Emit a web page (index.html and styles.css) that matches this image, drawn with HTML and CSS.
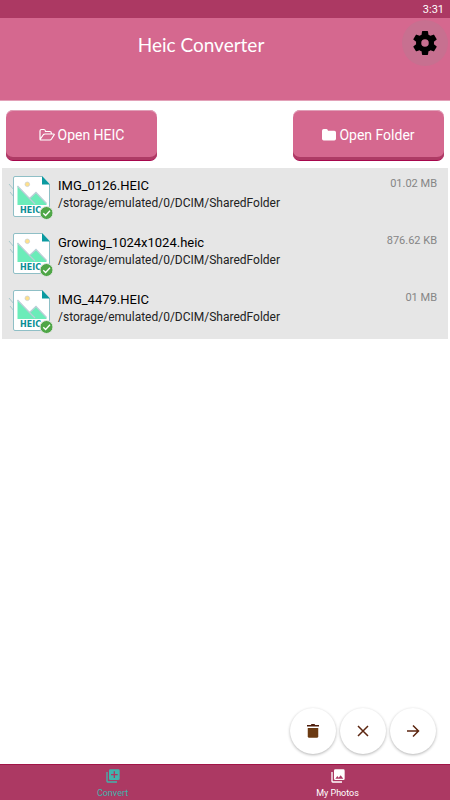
FILE: index.html
```html
<!DOCTYPE html>
<html lang="en">
<head>
<meta charset="utf-8">
<meta name="viewport" content="width=device-width, initial-scale=1">
<title>Heic Converter</title>
<link rel="stylesheet" href="styles.css">
</head>
<body>
<div class="app">
  <div class="status">3:31</div>
  <header class="header">
    <h1 class="title">Heic Converter</h1>
    <button class="settings" aria-label="Settings">
      <svg width="30" height="30" viewBox="0 0 24 24"><path d="M19.140 12.940c.04-.3.060-.61.060-.94s-.02-.64-.07-.94l2.030-1.580a.49.490 0 0 0 .12-.61l-1.920-3.320a.49.490 0 0 0-.59-.22l-2.390.96a7 7 0 0 0-1.620-.94l-.36-2.540a.48.480 0 0 0-.48-.41h-3.840a.48.480 0 0 0-.47.410l-.36 2.540c-.59.240-1.130.57-1.620.94l-2.390-.96a.48.480 0 0 0-.59.220L2.740 8.870a.48.480 0 0 0 .12.610l2.030 1.580a6 6 0 0 0 0 1.880l-2.030 1.580a.49.490 0 0 0-.12.610l1.920 3.320c.12.220.37.290.59.220l2.390-.96c.5.380 1.030.7 1.620.94l.36 2.540c.05.240.24.410.48.410h3.840c.24 0 .44-.17.470-.41l.36-2.540a7 7 0 0 0 1.620-.94l2.390.96c.22.080.47 0 .59-.22l1.920-3.320a.47.470 0 0 0-.12-.61zM12 15a3 3 0 1 1 0-6 3 3 0 0 1 0 6z"/></svg>
    </button>
  </header>
  <main class="main">
    <div class="actions">
      <button class="action">
        <svg width="16" height="14" viewBox="0 0 16 14" fill="none" stroke="#fff" stroke-width="1.200" stroke-linejoin="round"><path d="M1 11V3Q1 1.500 2.500 1.500H5Q6.300 1.500 6.500 3.500H11Q12.300 3.500 12.300 5V6M1 11.500L4.500 6.500Q5 6 6 6H14.500Q15.700 6 15 7L12.500 11Q11.800 12 11 12H2Q1 12 1 11"/></svg>
        <span>Open HEIC</span>
      </button>
      <button class="action">
        <svg width="14" height="14" viewBox="0 0 14 14"><path d="M0 2.800Q0 1 1.800 1H4.500Q5.700 1 6 2.700H12.300Q14 2.700 14 4.500V10.700Q14 12.500 12.300 12.500H1.700Q0 12.500 0 10.700Z" fill="#fff"/></svg>
        <span>Open Folder</span>
      </button>
    </div>
    <ul class="files">
      <li class="file">
        <svg class="thumb" width="46" height="46" viewBox="0 0 46 46">
          <path d="M1 10l5 6M2 18l4 5" fill="none" stroke="#a9c9cc"/>
          <path d="M7 2.500H34L41.500 10.500V41Q41.500 42.500 40 42.500H7Q5.500 42.500 5.500 41V4Q5.500 2.500 7 2.500Z" fill="#fff" stroke="#8fbfc6"/>
          <path d="M34 2L42 10.500H34Z" fill="#0b9aa0"/>
          <circle cx="19.300" cy="10.300" r="2.300" fill="#ffe08a" stroke="#c5cfd6" stroke-width=".7"/>
          <path d="M9.500 12L21.500 24.500L28 18.500L38.500 29.500V31H9.500Z" fill="#6becb9"/>
          <path d="M9.500 12L21.500 24.500L28 18.500L38.500 29.500M21.500 24.500L27 30" fill="none" stroke="#b9ced6" stroke-width="1.300"/>
          <text class="file-type" x="12" y="39">HEIC</text>
          <circle cx="38.500" cy="39" r="6.500" fill="#4fa647" stroke="#e6e6e6"/>
          <path d="M35.300 39.200L37.600 41.500L42 36.800" fill="none" stroke="#fff" stroke-width="1.300"/>
        </svg>
        <div class="info"><div class="name">IMG_0126.HEIC</div><div class="path">/storage/emulated/0/DCIM/SharedFolder</div></div>
        <div class="size">01.02 MB</div>
      </li>
      <li class="file">
        <svg class="thumb" width="46" height="46" viewBox="0 0 46 46">
          <path d="M1 10l5 6M2 18l4 5" fill="none" stroke="#a9c9cc"/>
          <path d="M7 2.500H34L41.500 10.500V41Q41.500 42.500 40 42.500H7Q5.500 42.500 5.500 41V4Q5.500 2.500 7 2.500Z" fill="#fff" stroke="#8fbfc6"/>
          <path d="M34 2L42 10.500H34Z" fill="#0b9aa0"/>
          <circle cx="19.300" cy="10.300" r="2.300" fill="#ffe08a" stroke="#c5cfd6" stroke-width=".7"/>
          <path d="M9.500 12L21.500 24.500L28 18.500L38.500 29.500V31H9.500Z" fill="#6becb9"/>
          <path d="M9.500 12L21.500 24.500L28 18.500L38.500 29.500M21.500 24.500L27 30" fill="none" stroke="#b9ced6" stroke-width="1.300"/>
          <text class="file-type" x="12" y="39">HEIC</text>
          <circle cx="38.500" cy="39" r="6.500" fill="#4fa647" stroke="#e6e6e6"/>
          <path d="M35.300 39.200L37.600 41.500L42 36.800" fill="none" stroke="#fff" stroke-width="1.300"/>
        </svg>
        <div class="info"><div class="name">Growing_1024x1024.heic</div><div class="path">/storage/emulated/0/DCIM/SharedFolder</div></div>
        <div class="size">876.62 KB</div>
      </li>
      <li class="file">
        <svg class="thumb" width="46" height="46" viewBox="0 0 46 46">
          <path d="M1 10l5 6M2 18l4 5" fill="none" stroke="#a9c9cc"/>
          <path d="M7 2.500H34L41.500 10.500V41Q41.500 42.500 40 42.500H7Q5.500 42.500 5.500 41V4Q5.500 2.500 7 2.500Z" fill="#fff" stroke="#8fbfc6"/>
          <path d="M34 2L42 10.500H34Z" fill="#0b9aa0"/>
          <circle cx="19.300" cy="10.300" r="2.300" fill="#ffe08a" stroke="#c5cfd6" stroke-width=".7"/>
          <path d="M9.500 12L21.500 24.500L28 18.500L38.500 29.500V31H9.500Z" fill="#6becb9"/>
          <path d="M9.500 12L21.500 24.500L28 18.500L38.500 29.500M21.500 24.500L27 30" fill="none" stroke="#b9ced6" stroke-width="1.300"/>
          <text class="file-type" x="12" y="39">HEIC</text>
          <circle cx="38.500" cy="39" r="6.500" fill="#4fa647" stroke="#e6e6e6"/>
          <path d="M35.300 39.200L37.600 41.500L42 36.800" fill="none" stroke="#fff" stroke-width="1.300"/>
        </svg>
        <div class="info"><div class="name">IMG_4479.HEIC</div><div class="path">/storage/emulated/0/DCIM/SharedFolder</div></div>
        <div class="size">01 MB</div>
      </li>
    </ul>
  </main>
  <div class="fabs">
    <button class="fab" aria-label="Delete"><svg width="18" height="18" viewBox="0 0 24 24" fill="#6b3a12"><path d="M5 8h14v11a2 2 0 0 1-2 2H7a2 2 0 0 1-2-2z"/><path d="M4 4h5l1-1.500h4L15 4h5v2H4z" fill="#4e1d0b"/></svg></button>
    <button class="fab" aria-label="Clear"><svg width="18" height="18" viewBox="0 0 18 18" fill="none" stroke="#5c2610" stroke-width="1.500"><path d="M4 4L14 14M14 4L4 14"/></svg></button>
    <button class="fab" aria-label="Convert files"><svg width="18" height="18" viewBox="0 0 18 18" fill="none" stroke="#5c2610" stroke-width="1.500"><path d="M3 9H14M9 3.500L14.500 9L9 14.500"/></svg></button>
  </div>
  <nav class="nav">
    <a class="tab current" href="#convert" aria-current="page">
      <svg width="16" height="16" viewBox="0 0 24 24" fill="currentColor"><path d="M4 6H2v14a2 2 0 0 0 2 2h14v-2H4zM20 2H8a2 2 0 0 0-2 2v12a2 2 0 0 0 2 2h12a2 2 0 0 0 2-2V4a2 2 0 0 0-2-2zm-1 9h-4v4h-2v-4H9V9h4V5h2v4h4z"/></svg>
      <span>Convert</span>
    </a>
    <a class="tab" href="#photos">
      <svg width="16" height="16" viewBox="0 0 24 24" fill="currentColor"><path d="M22 16V4a2 2 0 0 0-2-2H8a2 2 0 0 0-2 2v12a2 2 0 0 0 2 2h12a2 2 0 0 0 2-2zm-11-4l2.030 2.710L16 11l4 5H8zM2 6v14a2 2 0 0 0 2 2h14v-2H4V6z"/></svg>
      <span>My Photos</span>
    </a>
  </nav>
</div>
</body>
</html>
```
FILE: styles.css
```css
* { box-sizing: border-box; }
body { margin: 0; background: #fff; color: #000; font-family: Roboto, "Liberation Sans", sans-serif; }
button { border: 0; padding: 0; font: inherit; }
svg { display: block; flex: none; }
.app { min-height: 100vh; display: flex; flex-direction: column; }
.status { background: #ac3963; color: #fff; font-size: 11px; line-height: 16px; text-align: right; padding: 2px 6px 0 0; }
.header { background: #d5688f; min-height: 83px; display: grid; grid-template-columns: 1fr 48px; align-items: start; padding-top: 2px; border-bottom: 1px solid #e3a1b8; }
.title { margin: 0; padding: 13px 0 0; color: #fff; font-family: Lato, "Open Sans", sans-serif; font-size: 19px; line-height: 24px; font-weight: 400; text-align: center; }
.settings { width: 46px; height: 46px; border-radius: 50%; background: #c77090; display: grid; place-items: center; }
.main { flex: 1; }
.actions { display: flex; justify-content: space-between; padding: 9px 6px 7px; }
.action { flex: 0 0 151px; height: 51px; display: flex; align-items: center; justify-content: center; gap: 3px; color: #fff; background: #d5688f; border-radius: 7px; border-bottom: 1px solid #a6064c; box-shadow: inset 0 -3px #ae3b65, inset 0 1px #e0a0b8; font-size: 14px; line-height: 20px; }
.files { list-style: none; margin: 0 2px; padding: 0; background: #e6e6e6; }
.file { display: flex; align-items: flex-start; gap: 4px; padding: 6px 11px 5px 6px; }
.file-type { font-family: "DejaVu Sans", sans-serif; font-size: 8px; font-weight: 700; fill: #0b8f96; }
.info { flex: 1; min-width: 0; padding-top: 3px; }
.name { font-size: 13px; line-height: 18px; }
.path { font-size: 12px; line-height: 16px; color: #222; }
.size { font-size: 11px; line-height: 14px; color: #858585; padding-top: 3px; }
.fabs { display: flex; justify-content: flex-end; gap: 4px; padding: 0 14px 10px; }
.fab { width: 46px; height: 46px; border-radius: 50%; background: #fff; box-shadow: 0 1px 3px rgba(0, 0, 0, .3); display: grid; place-items: center; }
.nav { display: flex; background: #ac3963; border-top: 1px solid #a11548; }
.tab { flex: 1; display: flex; flex-direction: column; align-items: center; gap: 4px; padding: 3px 0 1px; color: #fff; font-size: 9px; line-height: 11px; text-decoration: none; }
.current { color: #42b3ad; }
```
